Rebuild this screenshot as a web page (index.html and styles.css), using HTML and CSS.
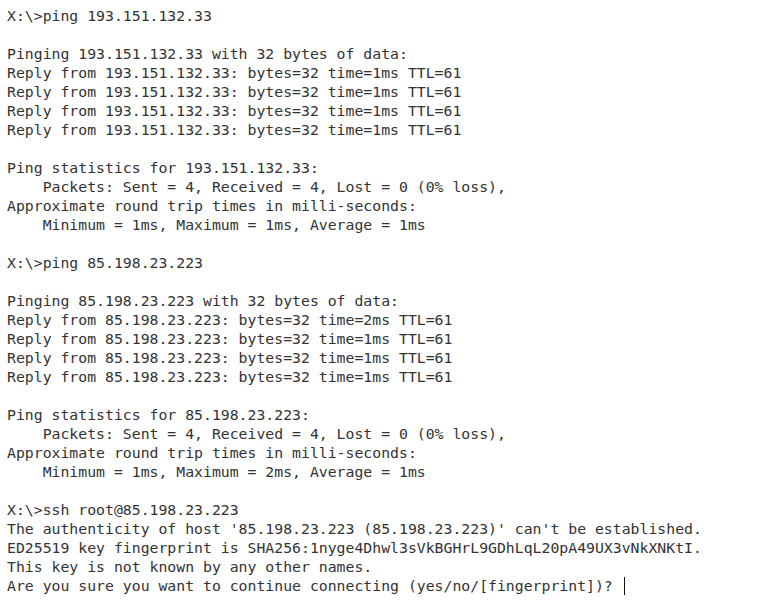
FILE: index.html
```html
<!DOCTYPE html>
<html>
<head>
<meta charset="utf-8">
<link rel="stylesheet" href="styles.css">
</head>
<body>
<pre class="term">X:\&gt;ping 193.151.132.33

Pinging 193.151.132.33 with 32 bytes of data:
Reply from 193.151.132.33: bytes=32 time=1ms TTL=61
Reply from 193.151.132.33: bytes=32 time=1ms TTL=61
Reply from 193.151.132.33: bytes=32 time=1ms TTL=61
Reply from 193.151.132.33: bytes=32 time=1ms TTL=61

Ping statistics for 193.151.132.33:
    Packets: Sent = 4, Received = 4, Lost = 0 (0% loss),
Approximate round trip times in milli-seconds:
    Minimum = 1ms, Maximum = 1ms, Average = 1ms

X:\&gt;ping 85.198.23.223

Pinging 85.198.23.223 with 32 bytes of data:
Reply from 85.198.23.223: bytes=32 time=2ms TTL=61
Reply from 85.198.23.223: bytes=32 time=1ms TTL=61
Reply from 85.198.23.223: bytes=32 time=1ms TTL=61
Reply from 85.198.23.223: bytes=32 time=1ms TTL=61

Ping statistics for 85.198.23.223:
    Packets: Sent = 4, Received = 4, Lost = 0 (0% loss),
Approximate round trip times in milli-seconds:
    Minimum = 1ms, Maximum = 2ms, Average = 1ms

X:\&gt;ssh root@85.198.23.223
The authenticity of host '85.198.23.223 (85.198.23.223)' can't be established.
ED25519 key fingerprint is SHA256:1nyge4Dhwl3sVkBGHrL9GDhLqL20pA49UX3vNkXNKtI.
This key is not known by any other names.
Are you sure you want to continue connecting (yes/no/[fingerprint])? <span class="cursor"></span></pre>
</body>
</html>
```

FILE: styles.css
```css
html, body {
  margin: 0;
  padding: 0;
  background: #ffffff;
}

.term {
  margin: 0;
  padding: 6px 0 0 7px;
  font-family: "DejaVu Sans Mono", "Liberation Mono", monospace;
  font-size: 14.8px;
  line-height: 19px;
  color: #333333;
  white-space: pre;
}

.cursor {
  display: inline-block;
  width: 0;
  height: 18px;
  margin-left: 2px;
  border-left: 1px solid #111111;
  vertical-align: -4px;
}
```
